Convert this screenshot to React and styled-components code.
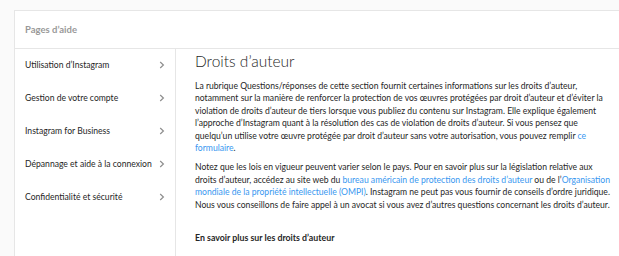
import React from 'react'
import styled, { createGlobalStyle } from 'styled-components'

const GlobalStyle = createGlobalStyle`
    html, body {
        margin: 0;
        padding: 0;
        background: #fafafa;
        overflow: hidden;
    }
    body {
        font-family: Lato, "Liberation Sans", Arial, sans-serif;
        color: #262626;
    }
`

const menu = [
    'Utilisation d’Instagram',
    'Gestion de votre compte',
    'Instagram for Business',
    'Dépannage et aide à la connexion',
    'Confidentialité et sécurité',
]

const Chevron = () => (
    <svg width="6" height="8" viewBox="0 0 6 8" fill="none">
        <path d="M1.2 1 L4.4 4 L1.2 7" stroke="#8e8e8e" strokeWidth="1.2" />
    </svg>
)

const App = () => {
    return (
        <Page>
            <GlobalStyle />
            <Card>
                <Header>Pages d’aide</Header>
                <Body>
                    <Sidebar>
                        {menu.map((label) => (
                            <NavItem key={label}>
                                <span>{label}</span>
                                <Chevron />
                            </NavItem>
                        ))}
                    </Sidebar>
                    <Content>
                        <Title>Droits d’auteur</Title>
                        <Paragraph>
                            La rubrique Questions/réponses de cette section fournit certaines informations sur les droits d’auteur,<br />
                            notamment sur la manière de renforcer la protection de vos œuvres protégées par droit d’auteur et d’éviter la<br />
                            violation de droits d’auteur de tiers lorsque vous publiez du contenu sur Instagram. Elle explique également<br />
                            l’approche d’Instagram quant à la résolution des cas de violation de droits d’auteur. Si vous pensez que<br />
                            quelqu’un utilise votre œuvre protégée par droit d’auteur sans votre autorisation, vous pouvez remplir{' '}
                            <Link>ce<br />formulaire</Link>.
                        </Paragraph>
                        <Paragraph>
                            Notez que les lois en vigueur peuvent varier selon le pays. Pour en savoir plus sur la législation relative aux<br />
                            droits d’auteur, accédez au site web du <Link>bureau américain de protection des droits d’auteur</Link> ou de l’
                            <Link>Organisation<br />mondiale de la propriété intellectuelle (OMPI)</Link>. Instagram ne peut pas vous fournir de conseils d’ordre juridique.<br />
                            Nous vous conseillons de faire appel à un avocat si vous avez d’autres questions concernant les droits d’auteur.
                        </Paragraph>
                        <SubTitle>En savoir plus sur les droits d’auteur</SubTitle>
                    </Content>
                </Body>
            </Card>
        </Page>
    )
}

export default App

const Page = styled.div`
    padding: 10px 0 0 14px;
    height: 256px;
    box-sizing: border-box;
`
const Card = styled.div`
    width: 700px;
    height: 300px;
    background: #fff;
    border: 1px solid #e6e6e6;
    box-sizing: border-box;
`
const Header = styled.div`
    height: 37px;
    display: flex;
    align-items: center;
    padding-left: 10px;
    font-size: 9.5px;
    font-weight: bold;
    color: #999;
    border-bottom: 1px solid #e6e6e6;
`
const Body = styled.div`
    display: grid;
    grid-template-columns: 161px 1fr;
    height: 100%;
`
const Sidebar = styled.nav`
    border-right: 1px solid #e6e6e6;
    padding: 8px 10px 0 10px;
    display: flex;
    flex-direction: column;
    gap: 17px;
`
const NavItem = styled.div`
    display: flex;
    align-items: center;
    justify-content: space-between;
    height: 16px;
    font-size: 8.6px;
    color: #262626;
    cursor: pointer;
`
const Content = styled.div`
    padding: 0 0 0 19px;
    white-space: nowrap;
`
const Title = styled.h1`
    margin: 0 0 7px;
    font-size: 15.5px;
    font-weight: 300;
    line-height: 24px;
    color: #262626;
`
const Paragraph = styled.p`
    margin: 0 0 7px;
    font-size: 8.6px;
    line-height: 12.4px;
    color: #262626;
`
const Link = styled.a`
    color: #3897f0;
    cursor: pointer;
`
const SubTitle = styled.h2`
    margin: 21px 0 0;
    font-size: 8.8px;
    font-weight: bold;
    line-height: 12.4px;
`
